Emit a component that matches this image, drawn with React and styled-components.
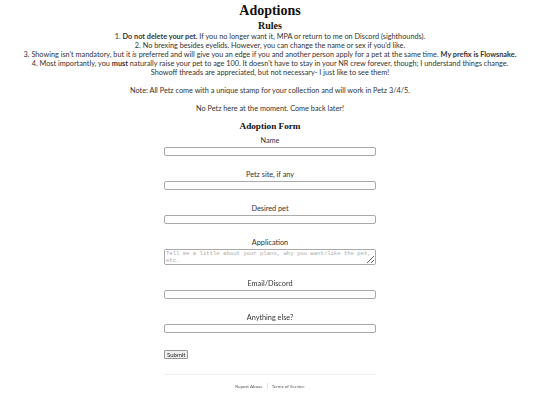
import React from 'react';
import styled, { createGlobalStyle } from 'styled-components';

const GlobalStyle = createGlobalStyle`
	html, body {
		margin: 0;
		padding: 0;
		background: #ffffff;
	}
	body {
		font-family: 'Lato', 'Open Sans', sans-serif;
		color: #333333;
	}
`;

const Page = styled.div`
	display: flex;
	flex-direction: column;
	align-items: center;
	text-align: center;
	padding-top: 2px;
`;

const Title = styled.h1`
	margin: 0;
	font-family: 'Liberation Serif', 'DejaVu Serif', serif;
	font-size: 14px;
	line-height: 18px;
	font-weight: bold;
	color: #111111;
`;

const SubTitle = styled.h2`
	margin: 0;
	font-family: 'Liberation Serif', 'DejaVu Serif', serif;
	font-size: 10px;
	line-height: 12px;
	font-weight: bold;
	color: #111111;
`;

const Text = styled.p`
	margin: ${(p) => p.$margin || '0'};
	font-size: 7.3px;
	line-height: 9px;
	white-space: nowrap;
`;

const Form = styled.form`
	display: flex;
	flex-direction: column;
	width: 212px;
	margin-top: 8px;
`;

const FormTitle = styled(SubTitle)`
	font-size: 9.2px;
	line-height: 11px;
	margin-bottom: 4px;
`;

const Field = styled.div`
	display: flex;
	flex-direction: column;
	margin-bottom: 14px;
`;

const Label = styled.label`
	font-size: 7.3px;
	line-height: 9px;
	margin-bottom: 2px;
`;

const Input = styled.input`
	box-sizing: border-box;
	width: 100%;
	height: 9px;
	margin: 0;
	padding: 0 2px;
	border: 1px solid #a9a9a9;
	border-radius: 2px;
	background: #ffffff;
	font-size: 6px;
`;

const TextArea = styled.textarea`
	box-sizing: border-box;
	width: 100%;
	height: 16px;
	margin: 0;
	padding: 1px;
	border: 1px solid #a9a9a9;
	border-radius: 2px;
	font-family: 'Liberation Mono', 'DejaVu Sans Mono', monospace;
	font-size: 5.6px;
	line-height: 6.5px;
	resize: vertical;
	&::placeholder {
		color: #aaaaaa;
	}
`;

const SubmitRow = styled.div`
	display: flex;
	margin-top: 3px;
`;

const Button = styled.button`
	box-sizing: border-box;
	height: 9px;
	padding: 0 2px;
	border: 1px solid #999999;
	border-radius: 1px;
	background: #efefef;
	font-family: 'Lato', sans-serif;
	font-size: 6px;
	line-height: 7px;
	color: #222222;
`;

const Footer = styled.div`
	width: 212px;
	margin-top: 15px;
	border-top: 1px solid #eeeeee;
	padding-top: 8px;
	display: flex;
	justify-content: center;
	align-items: center;
	font-size: 4.6px;
	line-height: 6px;
	color: #555555;
`;

const FooterLink = styled.a`
	color: inherit;
	text-decoration: none;
	padding: 0 4px;
	& + & {
		border-left: 1px solid #e2e2e2;
	}
`;

const fields = [
	{ label: 'Name' },
	{ label: 'Petz site, if any' },
	{ label: 'Desired pet' },
	{
		label: 'Application',
		area: true,
		placeholder: 'Tell me a little about your plans, why you want/like the pet, etc.',
	},
	{ label: 'Email/Discord' },
	{ label: 'Anything else?' },
];

function App() {
	return (
		<>
			<GlobalStyle />
			<Page>
				<Title>Adoptions</Title>
				<SubTitle>Rules</SubTitle>
				<Text>
					1. <b>Do not delete your pet.</b> If you no longer want it, MPA or return to me on
					Discord (sighthounds).
					<br />
					2. No brexing besides eyelids. However, you can change the name or sex if you'd like.
					<br />
					3. Showing isn't mandatory, but it <i>is</i> preferred and will give you an edge if you
					and another person apply for a pet at the same time. <b>My prefix is Flowsnake.</b>
					<br />
					4. Most importantly, you <b>must</b> naturally raise your pet to age 100. It doesn't
					have to stay in your NR crew forever, though; I understand things change.
					<br />
					Showoff threads are appreciated, but not necessary- I just like to see them!
					<br />
					<br />
					Note: All Petz come with a unique stamp for your collection and will work in Petz 3/4/5.
				</Text>
				<Text $margin="9px 0 0">No Petz here at the moment. Come back later!</Text>
				<Form onSubmit={(e) => e.preventDefault()}>
					<FormTitle>Adoption Form</FormTitle>
					{fields.map((f) => (
						<Field key={f.label}>
							<Label>{f.label}</Label>
							{f.area ? (
								<TextArea placeholder={f.placeholder} />
							) : (
								<Input type="text" />
							)}
						</Field>
					))}
					<SubmitRow>
						<Button type="submit">Submit</Button>
					</SubmitRow>
				</Form>
				<Footer>
					<FooterLink href="#">Report Abuse</FooterLink>
					<FooterLink href="#">Terms of Service</FooterLink>
				</Footer>
			</Page>
		</>
	);
}

export default App;
